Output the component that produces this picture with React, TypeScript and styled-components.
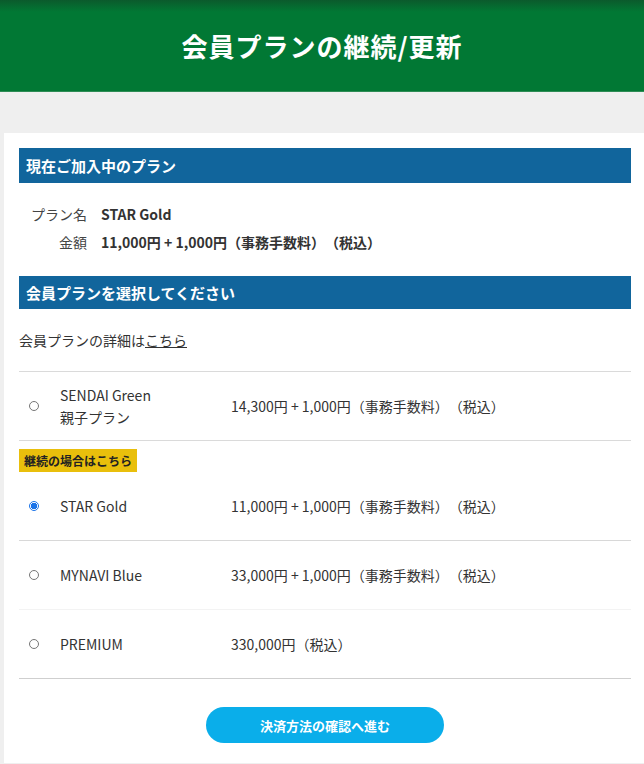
import React from "react";
import styled, { createGlobalStyle } from "styled-components";

const GlobalStyle = createGlobalStyle`
  body {
    margin: 0;
    background: #efefef;
    font-family: "Noto Sans CJK JP", "Noto Sans", sans-serif;
    color: #333;
    text-spacing-trim: space-all;
  }
`;

const Header = styled.header`
  height: 92px;
  display: flex;
  align-items: center;
  justify-content: center;
  background: linear-gradient(#0b5a2c 0px, #017834 12px, #017834 100%);
  border-bottom: 1px solid #2e8c55;
  box-sizing: border-box;
`;

const Title = styled.h1`
  margin: 0;
  color: #fff;
  font-size: 26px;
  font-weight: 700;
  letter-spacing: 1px;
`;

const Card = styled.main`
  margin: 41px 0 2px 4px;
  background: #fff;
  padding: 15px 13px 20px 15px;
`;

const SectionBar = styled.h2<{ $h: number }>`
  margin: 0;
  height: ${({ $h }) => $h}px;
  display: flex;
  align-items: center;
  padding-left: 7px;
  background: #11659c;
  color: #fff;
  font-size: 15px;
  font-weight: 700;
`;

const InfoGrid = styled.dl`
  margin: 17px 0 20px;
  display: grid;
  grid-template-columns: 68px 1fr;
  column-gap: 14px;
  font-size: 14px;
  line-height: 28px;
`;

const InfoLabel = styled.dt`
  text-align: right;
  color: #444;
`;

const InfoValue = styled.dd`
  margin: 0;
  font-weight: 700;
`;

const DetailText = styled.p`
  margin: 21px 0 21px;
  font-size: 14px;
  line-height: 20px;
`;

const DetailLink = styled.a`
  color: #333;
  text-decoration: underline;
`;

const PlanList = styled.div`
  border-top: 1px solid #dadada;
  border-bottom: 1px solid #cfcfcf;
`;

const PlanRow = styled.label<{ $line?: string }>`
  height: 68px;
  display: grid;
  grid-template-columns: 41px 171px 1fr;
  align-items: center;
  font-size: 14px;
  line-height: 22px;
  ${({ $line }) => ($line ? `border-top: 1px solid ${$line};` : "")}
`;

const RadioCell = styled.span`
  display: flex;
  padding-left: 10px;
`;

const Radio = styled.input`
  appearance: none;
  margin: 0;
  width: 10px;
  height: 10px;
  border-radius: 50%;
  border: 1px solid #767676;
  box-sizing: border-box;
  &:checked {
    border: 1px solid #1a73e8;
    background: radial-gradient(circle, #1a73e8 0 3px, #fff 3.5px);
  }
`;

const PlanName = styled.span`
  color: #333;
`;

const PlanPrice = styled.span`
  color: #333;
`;

const Badge = styled.div`
  width: fit-content;
  margin-top: 8px;
  height: 23px;
  line-height: 23px;
  padding: 0 5px;
  background: #e9bf0c;
  color: #222;
  font-size: 12px;
  font-weight: 700;
`;

const Divider = styled.div`
  border-top: 1px solid #dadada;
`;

const ButtonWrap = styled.div`
  display: flex;
  justify-content: center;
  margin-top: 28px;
`;

const NextButton = styled.button`
  width: 238px;
  height: 36px;
  border: none;
  border-radius: 18px;
  background: #0aaeea;
  color: #fff;
  font-family: inherit;
  font-size: 13px;
  font-weight: 700;
`;

const plans = [
  { id: "mynavi", name: "MYNAVI Blue", price: "33,000円 + 1,000円（事務手数料）（税込）", line: "#d8d8d8" },
  { id: "premium", name: "PREMIUM", price: "330,000円（税込）", line: "#f3f3f3" },
];

export default function App() {
  return (
    <>
      <GlobalStyle />
      <Header>
        <Title>会員プランの継続/更新</Title>
      </Header>
      <Card>
        <SectionBar $h={35}>現在ご加入中のプラン</SectionBar>
        <InfoGrid>
          <InfoLabel>プラン名</InfoLabel>
          <InfoValue>STAR Gold</InfoValue>
          <InfoLabel>金額</InfoLabel>
          <InfoValue>11,000円 + 1,000円（事務手数料）（税込）</InfoValue>
        </InfoGrid>
        <SectionBar $h={33}>会員プランを選択してください</SectionBar>
        <DetailText>
          会員プランの詳細は<DetailLink href="#">こちら</DetailLink>
        </DetailText>
        <PlanList>
          <PlanRow>
            <RadioCell>
              <Radio type="radio" name="plan" />
            </RadioCell>
            <PlanName>
              SENDAI Green
              <br />
              親子プラン
            </PlanName>
            <PlanPrice>14,300円 + 1,000円（事務手数料）（税込）</PlanPrice>
          </PlanRow>
          <Divider />
          <Badge>継続の場合はこちら</Badge>
          <PlanRow>
            <RadioCell>
              <Radio type="radio" name="plan" defaultChecked />
            </RadioCell>
            <PlanName>STAR Gold</PlanName>
            <PlanPrice>11,000円 + 1,000円（事務手数料）（税込）</PlanPrice>
          </PlanRow>
          {plans.map((p) => (
            <PlanRow key={p.id} $line={p.line}>
              <RadioCell>
                <Radio type="radio" name="plan" />
              </RadioCell>
              <PlanName>{p.name}</PlanName>
              <PlanPrice>{p.price}</PlanPrice>
            </PlanRow>
          ))}
        </PlanList>
        <ButtonWrap>
          <NextButton>決済方法の確認へ進む</NextButton>
        </ButtonWrap>
      </Card>
    </>
  );
}
